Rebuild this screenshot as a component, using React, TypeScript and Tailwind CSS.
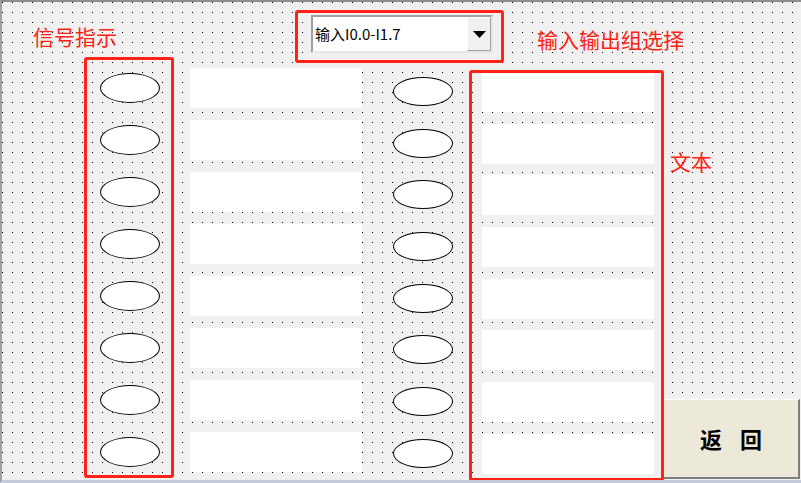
import React from "react";

const cjk = { fontFamily: '"Noto Sans CJK SC", "Noto Sans", sans-serif' };

const Lamp = ({ h }: { h: string }) => (
  <div className={`w-[60px] ${h} rounded-[50%] border border-black bg-white`} />
);

export default function App() {
  const rows = Array.from({ length: 8 }, (_, i) => i);

  return (
    <div
      className="relative w-[801px] h-[483px] overflow-hidden box-border border-t-2 border-l-2 border-b-[3px] border-t-[#8c8c8c] border-l-[#a0a0a0] border-b-[#c3cbdc] bg-[#f0f0f0] [background-image:conic-gradient(at_1px_1px,transparent_75%,#000_0)] [background-size:10px_10px] pt-[13px]"
      style={cjk}
    >
      {/* Combobox */}
      <div className="ml-[309px] flex h-[38px] w-[182px] box-border border-2 border-t-[#a0a0a0] border-l-[#a0a0a0] border-r-[#e6e6e6] border-b-[#e6e6e6] bg-white">
        <div className="flex flex-1 items-center pl-[2px] text-[15px] text-black">
          输入I0.0-I1.7
        </div>
        <div className="flex w-[24px] items-center justify-center box-border border border-t-white border-l-white border-r-[#a0a0a0] border-b-[#a0a0a0] bg-[#f0f0f0]">
          <svg width="13" height="7" viewBox="0 0 13 7">
            <polygon points="0,0 13,0 6.5,7" fill="#000" />
          </svg>
        </div>
      </div>

      {/* Widgets */}
      <div className="flex items-start">
        <div className="ml-[98px] mt-[20px] flex flex-col gap-[22px]">
          {rows.map((i) => (
            <Lamp key={i} h="h-[30px]" />
          ))}
        </div>
        <div className="ml-[30px] mt-[15px] flex flex-col gap-[12px]">
          {rows.map((i) => (
            <div key={i} className="h-[40px] w-[172px] bg-white" />
          ))}
        </div>
        <div className="ml-[31px] mt-[24px] flex flex-col gap-[22.7px]">
          {rows.map((i) => (
            <Lamp key={i} h="h-[29px]" />
          ))}
        </div>
        <div className="ml-[29px] mt-[19px] flex flex-col gap-[11.7px]">
          {rows.map((i) => (
            <div key={i} className="h-[40px] w-[172px] bg-white" />
          ))}
        </div>
        <div className="ml-[9px] mt-[346px] flex h-[80px] w-[137px] box-border items-center justify-center gap-[18px] border-t border-l border-t-white border-l-[#f4f2ea] border-r-2 border-b-2 border-r-[#7f7f7f] border-b-[#7f7f7f] bg-[#ece9d8] text-[22px] font-bold text-black">
          <span>返</span>
          <span>回</span>
        </div>
      </div>

      {/* Annotations */}
      <div className="pointer-events-none absolute left-[82px] top-[55px] h-[421px] w-[90px] rounded-[3px] border-[3px] border-[#ff2215]" />
      <div className="pointer-events-none absolute left-[467px] top-[68px] h-[411px] w-[195px] rounded-[3px] border-[3px] border-[#ff2215]" />
      <div className="pointer-events-none absolute left-[293px] top-[8px] h-[53px] w-[209px] rounded-[3px] border-[3px] border-[#ff2215]" />

      <div className="absolute left-[31px] top-[24px] text-[21px] leading-none text-[#ff2215]">
        信号指示
      </div>
      <div className="absolute left-[535px] top-[27px] text-[21px] leading-none text-[#ff2215]">
        输入输出组选择
      </div>
      <div className="absolute left-[668px] top-[149px] text-[21px] leading-none text-[#ff2215]">
        文本
      </div>
    </div>
  );
}
